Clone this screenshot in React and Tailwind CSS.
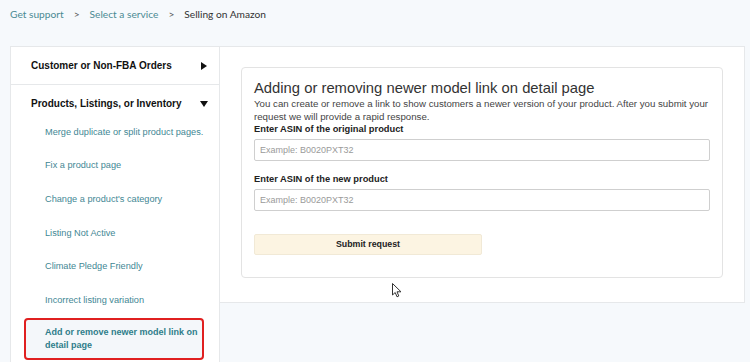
import React from 'react';

const subItems = [
  'Merge duplicate or split product pages.',
  'Fix a product page',
  "Change a product's category",
  'Listing Not Active',
  'Climate Pledge Friendly',
  'Incorrect listing variation',
];

function TriRight() {
  return (
    <svg width="6" height="8" viewBox="0 0 6 8" className="block">
      <path d="M0 0 L6 4 L0 8 Z" fill="#111" />
    </svg>
  );
}

function TriDown() {
  return (
    <svg width="8" height="6" viewBox="0 0 8 6" className="block">
      <path d="M0 0 L8 0 L4 6 Z" fill="#111" />
    </svg>
  );
}

function Field({ label, className }) {
  return (
    <div className={className}>
      <div className="text-[9.3px] leading-[13px] font-bold text-[#222]">{label}</div>
      <input
        className="mt-[3px] block w-[456px] h-[22px] border border-[#cfcfcf] rounded-[2px] px-[5px] text-[9px] text-[#333] placeholder:text-[#9a9a9a] outline-none bg-white"
        placeholder="Example: B0020PXT32"
      />
    </div>
  );
}

export default function App() {
  return (
    <div className="relative h-[362px] overflow-hidden bg-[#f6f9fc] font-['Liberation_Sans',Arial,sans-serif]">
      {/* breadcrumb */}
      <div className="h-[46px] pl-[10px] pt-[6px] flex items-start text-[10.2px] leading-[16px] font-['Lato',sans-serif]">
        <span className="text-[#4b8a93]">Get support</span>
        <span className="mx-[10px] text-[#555]">&gt;</span>
        <span className="text-[#4b8a93]">Select a service</span>
        <span className="mx-[10px] text-[#555]">&gt;</span>
        <span className="text-[#333]">Selling on Amazon</span>
      </div>

      <div className="ml-[10px] w-[735px] flex items-start">
        {/* sidebar */}
        <div className="w-[210px] h-[330px] bg-white border border-[#e6e8ea]">
          <div className="h-[38px] flex items-center justify-between pl-[20px] pr-[12px] border-b border-[#e6e8ea]">
            <span className="text-[10px] font-bold text-[#111]">Customer or Non-FBA Orders</span>
            <TriRight />
          </div>
          <div className="h-[31px] pt-[13px] pl-[20px] pr-[11px] flex items-start justify-between">
            <span className="text-[10px] leading-[12px] font-bold text-[#111]">Products, Listings, or Inventory</span>
            <span className="pt-[3px]"><TriDown /></span>
          </div>
          {subItems.map((t) => (
            <div key={t} className="h-[33.6px] flex items-center pl-[34px] text-[9.2px] text-[#3f8794]">
              {t}
            </div>
          ))}
          <div className="ml-[13px] w-[180px] h-[42px] border-2 border-[#e02020] rounded-[4px] bg-[#f4f7fa] pl-[19px] pt-[6px] text-[9px] leading-[13px] font-bold text-[#2f7d8a]">
            Add or remove newer model link on detail page
          </div>
        </div>

        {/* content */}
        <div className="flex-1 h-[257px] bg-white border border-l-0 border-[#e6e8ea] pt-[20px] pl-[21px] pr-[21px]">
          <div className="h-[211px] border border-[#e3e3e3] rounded-[4px] pl-[12px] pt-[11px]">
            <h1 className="text-[14.8px] leading-[18px] text-[#333]">
              Adding or removing newer model link on detail page
            </h1>
            <p className="text-[9.7px] leading-[13px] text-[#444] w-[462px]">
              You can create or remove a link to show customers a newer version of your product. After you submit your request we will provide a rapid response.
            </p>
            <Field label="Enter ASIN of the original product" />
            <Field label="Enter ASIN of the new product" className="mt-[12px]" />
            <button className="mt-[23px] block w-[228px] h-[21px] bg-[#fcf4e2] border border-[#f1e9d6] rounded-[2px] text-[8.8px] font-bold text-[#222]">
              Submit request
            </button>
          </div>
        </div>
      </div>

      {/* cursor */}
      <svg className="absolute left-[392px] top-[283px]" width="10" height="15" viewBox="0 0 10 15">
        <path d="M0.5 0.5 L0.5 12 L3.2 9.5 L5 13.8 L6.8 13 L5 8.8 L9 8.8 Z" fill="#fff" stroke="#333" strokeWidth="1" strokeLinejoin="round" />
      </svg>
    </div>
  );
}
